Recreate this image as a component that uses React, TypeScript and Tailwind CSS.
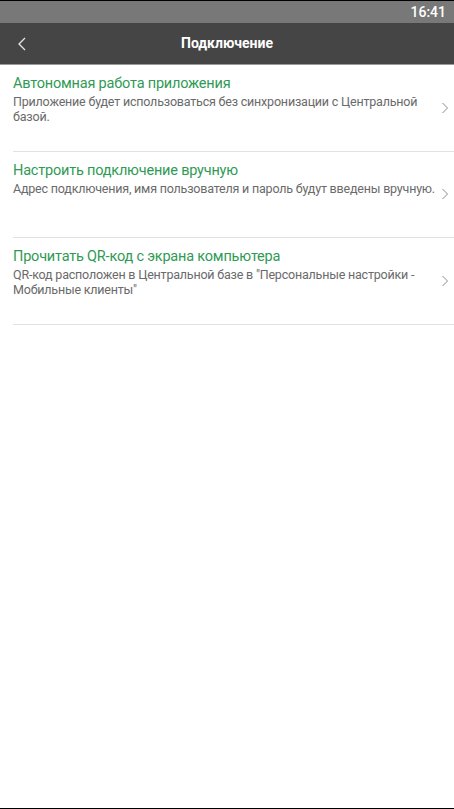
const items = [
  {
    title: "Автономная работа приложения",
    text: "Приложение будет использоваться без синхронизации с Центральной базой.",
  },
  {
    title: "Настроить подключение вручную",
    text: "Адрес подключения, имя пользователя и пароль будут введены вручную.",
  },
  {
    title: "Прочитать QR-код с экрана компьютера",
    text: 'QR-код расположен в Центральной базе в "Персональные настройки - Мобильные клиенты"',
  },
];

export default function App() {
  return (
    <div className="w-[454px] h-[809px] bg-white border-y border-black flex flex-col font-['Roboto',sans-serif] overflow-hidden">
      {/* status bar */}
      <div className="h-[22px] bg-[#787878] flex items-center justify-end pr-[8px]">
        <span className="text-white text-[14px] font-medium">16:41</span>
      </div>

      {/* toolbar */}
      <div className="h-[42px] bg-[#454545] border-b border-[#9a9a9a] grid grid-cols-[48px_1fr_48px] items-center">
        <button className="flex items-center justify-start pl-[17px] text-[#e8e8e8]">
          <svg width="10" height="14" viewBox="0 0 10 14" fill="none">
            <path d="M8 1 L2 7 L8 13" stroke="currentColor" strokeWidth="1.3" />
          </svg>
        </button>
        <h1 className="text-center text-white text-[14px] font-bold">Подключение</h1>
        <div />
      </div>

      {/* list */}
      <div className="flex flex-col">
        {items.map((it) => (
          <div
            key={it.title}
            className="ml-[13px] h-[86.5px] border-b border-[#e2e2e2] flex items-center"
          >
            <div className="flex-1 self-start pt-[9px] pr-[2px]">
              <div className="text-[14.5px] leading-[20px] tracking-[-0.2px] text-[#2f9a55]">{it.title}</div>
              <div className="text-[12.5px] leading-[14.5px] tracking-[-0.2px] text-[#6a6a6a] mt-[1px]">{it.text}</div>
            </div>
            <svg className="mr-[5px] shrink-0 text-[#8c8c8c]" width="8" height="12" viewBox="0 0 8 12" fill="none">
              <path d="M1.5 1 L6.5 6 L1.5 11" stroke="currentColor" strokeWidth="1" />
            </svg>
          </div>
        ))}
      </div>
    </div>
  );
}
